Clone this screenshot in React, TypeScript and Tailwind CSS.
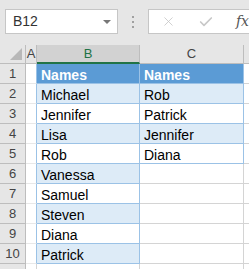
import { X, Check } from "lucide-react";

const colB = ["Michael", "Jennifer", "Lisa", "Rob", "Vanessa", "Samuel", "Steven", "Diana", "Patrick"];
const colC = ["Rob", "Patrick", "Jennifer", "Diana"];

const font = { fontFamily: '"Liberation Sans", Arial, sans-serif' };

export default function App() {
  const rows = Array.from({ length: 11 }, (_, i) => i + 1);

  return (
    <div className="flex h-[269px] w-[249px] flex-col overflow-hidden bg-[#e6e6e6]" style={font}>
      {/* formula bar */}
      <div className="flex h-[45px] shrink-0 items-start pt-[9px]">
        <div className="ml-[5px] flex h-[25px] w-[121px] items-center justify-between border border-[#c6c6c6] bg-white pl-[7px] pr-[6px]">
          <span className="text-[14px] text-[#333]">B12</span>
          <span className="h-0 w-0 border-x-[4px] border-t-[4px] border-x-transparent border-t-[#777]" />
        </div>
        <div className="ml-[14px] mt-[7px] flex flex-col gap-[3px]">
          <span className="h-[2px] w-[2px] bg-[#a0a0a0]" />
          <span className="h-[2px] w-[2px] bg-[#a0a0a0]" />
          <span className="h-[2px] w-[2px] bg-[#a0a0a0]" />
        </div>
        <div className="ml-[14px] flex h-[25px] flex-1 items-center border border-r-0 border-[#c6c6c6] bg-white pl-[12px]">
          <X size={15} strokeWidth={1.25} className="text-[#c4c4c4]" />
          <Check size={16} strokeWidth={2.5} className="ml-[22px] text-[#c8c8c8]" />
          <span className="ml-[22px] text-[14px] italic text-[#555]" style={{ fontFamily: '"DejaVu Serif", serif' }}>fx</span>
        </div>
      </div>

      {/* sheet */}
      <div className="grid flex-1 grid-cols-[26px_11px_103px_104px_1fr] grid-rows-[19px] auto-rows-[20px] bg-white text-[14px]">
        {/* column headers */}
        <div className="relative border-b border-r border-[#bdbdbd] bg-[#e6e6e6]">
          <span className="absolute bottom-[3px] right-[3px] h-0 w-0 border-b-[12px] border-l-[12px] border-b-[#b8b8b8] border-l-transparent" />
        </div>
        <div className="flex items-center justify-center border-b border-r border-[#bdbdbd] bg-[#e6e6e6] text-[13px] text-[#444]">A</div>
        <div className="flex items-center justify-center border-b-2 border-r border-b-[#217346] border-r-[#bdbdbd] bg-[#d2d2d2] text-[13px] text-[#217346]">B</div>
        <div className="flex items-center justify-center border-b border-r border-[#bdbdbd] bg-[#e6e6e6] text-[13px] text-[#444]">C</div>
        <div className="border-b border-[#bdbdbd] bg-[#e6e6e6]" />

        {rows.map((r) => {
          const bVal = r === 1 ? "Names" : colB[r - 2];
          const cVal = r === 1 ? "Names" : colC[r - 2];
          const inB = r <= 10;
          const inC = r <= 5;
          const band = r % 2 === 0;
          const cellB = !inB
            ? "border-b border-r border-[#d4d4d4] bg-white"
            : r === 1
              ? "border-b border-r border-[#9bc2e6] bg-[#5b9bd5] font-bold text-white"
              : `border-b border-r border-[#9bc2e6] ${band ? "bg-[#ddebf7]" : "bg-white"} text-black`;
          const cellC = !inC
            ? "border-b border-r border-[#d4d4d4] bg-white"
            : r === 1
              ? "border-b border-r border-[#9bc2e6] bg-[#5b9bd5] font-bold text-white"
              : `border-b border-r border-[#9bc2e6] ${band ? "bg-[#ddebf7]" : "bg-white"} text-black`;
          return (
            <div key={r} className="contents">
              <div className="flex items-end justify-center border-b border-r border-[#bdbdbd] bg-[#e6e6e6] pb-[1px] text-[13px] leading-[16px] text-[#444]">
                {r <= 10 ? r : ""}
              </div>
              <div className={`border-b border-r ${inB ? "border-b-[#e8e8e8] border-r-[#9bc2e6]" : "border-[#d4d4d4]"} bg-white`} />
              <div className={`flex items-end pl-[4px] leading-[16px] ${cellB}`}>{inB ? bVal : ""}</div>
              <div className={`flex items-end pl-[4px] leading-[16px] ${cellC}`}>{inC ? cVal : ""}</div>
              <div className="border-b border-[#d4d4d4] bg-white" />
            </div>
          );
        })}
      </div>
    </div>
  );
}
